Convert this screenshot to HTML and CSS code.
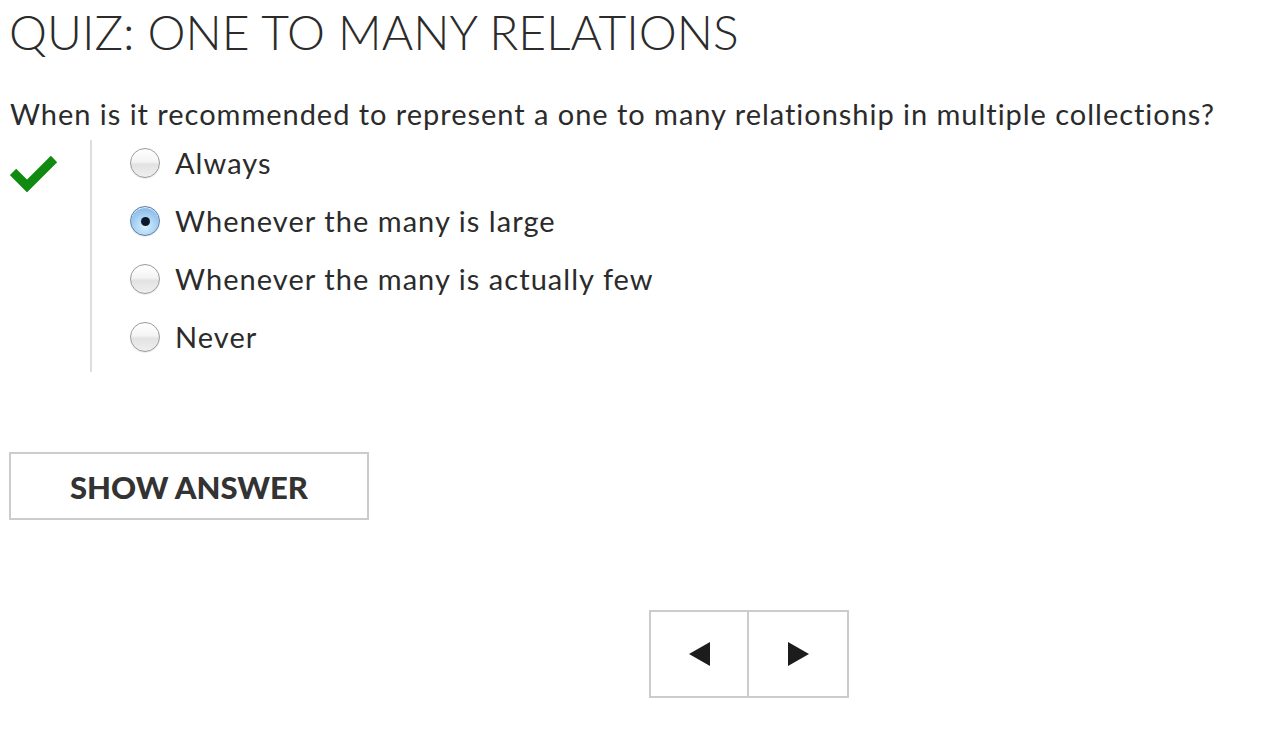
FILE: index.html
```html
<!DOCTYPE html>
<html>
<head>
<meta charset="utf-8">
<link rel="stylesheet" href="styles.css">
</head>
<body>
<div class="quiz">
  <h1 class="title">QUIZ: ONE TO MANY RELATIONS</h1>
  <p class="question">When is it recommended to represent a one to many relationship in multiple collections?</p>
  <div class="answers">
    <div class="status">
      <svg width="48" height="40" viewBox="0 0 48 40"><polyline points="3,20 17,34 44,7" fill="none" stroke="#118a11" stroke-width="9"/></svg>
    </div>
    <ul class="options">
      <li class="option"><span class="radio"></span><span class="label">Always</span></li>
      <li class="option"><span class="radio checked"></span><span class="label">Whenever the many is large</span></li>
      <li class="option"><span class="radio"></span><span class="label">Whenever the many is actually few</span></li>
      <li class="option"><span class="radio"></span><span class="label">Never</span></li>
    </ul>
  </div>
  <button class="show">SHOW ANSWER</button>
  <div class="nav">
    <button class="navbtn"><span class="tri-left"></span></button>
    <button class="navbtn next"><span class="tri-right"></span></button>
  </div>
</div>
</body>
</html>
```

FILE: styles.css
```css
html, body {
  margin: 0;
  padding: 0;
  background: #fff;
}
body {
  font-family: Lato, "Liberation Sans", sans-serif;
  color: #2b2b2b;
}
.quiz {
  padding: 0 0 0 9px;
  display: flex;
  flex-direction: column;
  align-items: flex-start;
}
.title {
  margin: 0;
  padding-top: 4px;
  font-size: 48px;
  line-height: 56px;
  font-weight: 300;
  letter-spacing: 0;
}
.question {
  margin: 37px 0 0 1px;
  font-size: 29px;
  line-height: 34px;
  font-weight: 400;
  letter-spacing: 0.97px;
}
.answers {
  display: flex;
  margin-top: 9px;
}
.status {
  width: 80px;
  padding-top: 12px;
  padding-left: 1px;
}
.status svg {
  display: block;
}
.options {
  list-style: none;
  margin: 0;
  padding: 0 0 12px 38px;
  border-left: 2px solid #dedede;
  display: flex;
  flex-direction: column;
  gap: 12px;
}
.option {
  height: 46px;
  display: flex;
  align-items: center;
  gap: 15px;
}
.radio {
  width: 28px;
  height: 28px;
  border-radius: 50%;
  border: 1px solid #9a9a9a;
  background: linear-gradient(#ffffff 0%, #f4f4f4 45%, #e2e2e2 55%, #efefef 100%);
  box-shadow: inset 0 1px 1px rgba(255,255,255,0.9), 0 1px 1px rgba(0,0,0,0.08);
  display: flex;
  align-items: center;
  justify-content: center;
}
.radio.checked {
  border-color: #5b7fa8;
  background: radial-gradient(circle at 50% 70%, #d8eefc 0%, #a9d2f4 45%, #6fa9e0 100%);
}
.radio.checked::after {
  content: "";
  width: 9px;
  height: 9px;
  border-radius: 50%;
  background: #0d1a2b;
}
.label {
  font-size: 29px;
  line-height: 34px;
  letter-spacing: 1.05px;
}
.show {
  margin-top: 80px;
  width: 360px;
  height: 68px;
  border: 2px solid #cccccc;
  background: #fff;
  font-family: Lato, "Liberation Sans", sans-serif;
  font-weight: 900;
  font-size: 31px;
  color: #333;
  padding: 0;
  padding-top: 2px;
  cursor: pointer;
}
.nav {
  display: flex;
  margin-top: 90px;
  margin-left: 640px;
}
.navbtn {
  width: 100px;
  height: 88px;
  border: 2px solid #cccccc;
  background: #fff;
  padding: 0;
  display: flex;
  align-items: center;
  justify-content: center;
}
.navbtn.next {
  border-left: none;
}
.tri-left {
  width: 0;
  height: 0;
  border-top: 12px solid transparent;
  border-bottom: 12px solid transparent;
  border-right: 21px solid #1c1c1c;
}
.tri-right {
  width: 0;
  height: 0;
  border-top: 12px solid transparent;
  border-bottom: 12px solid transparent;
  border-left: 21px solid #1c1c1c;
}
```
